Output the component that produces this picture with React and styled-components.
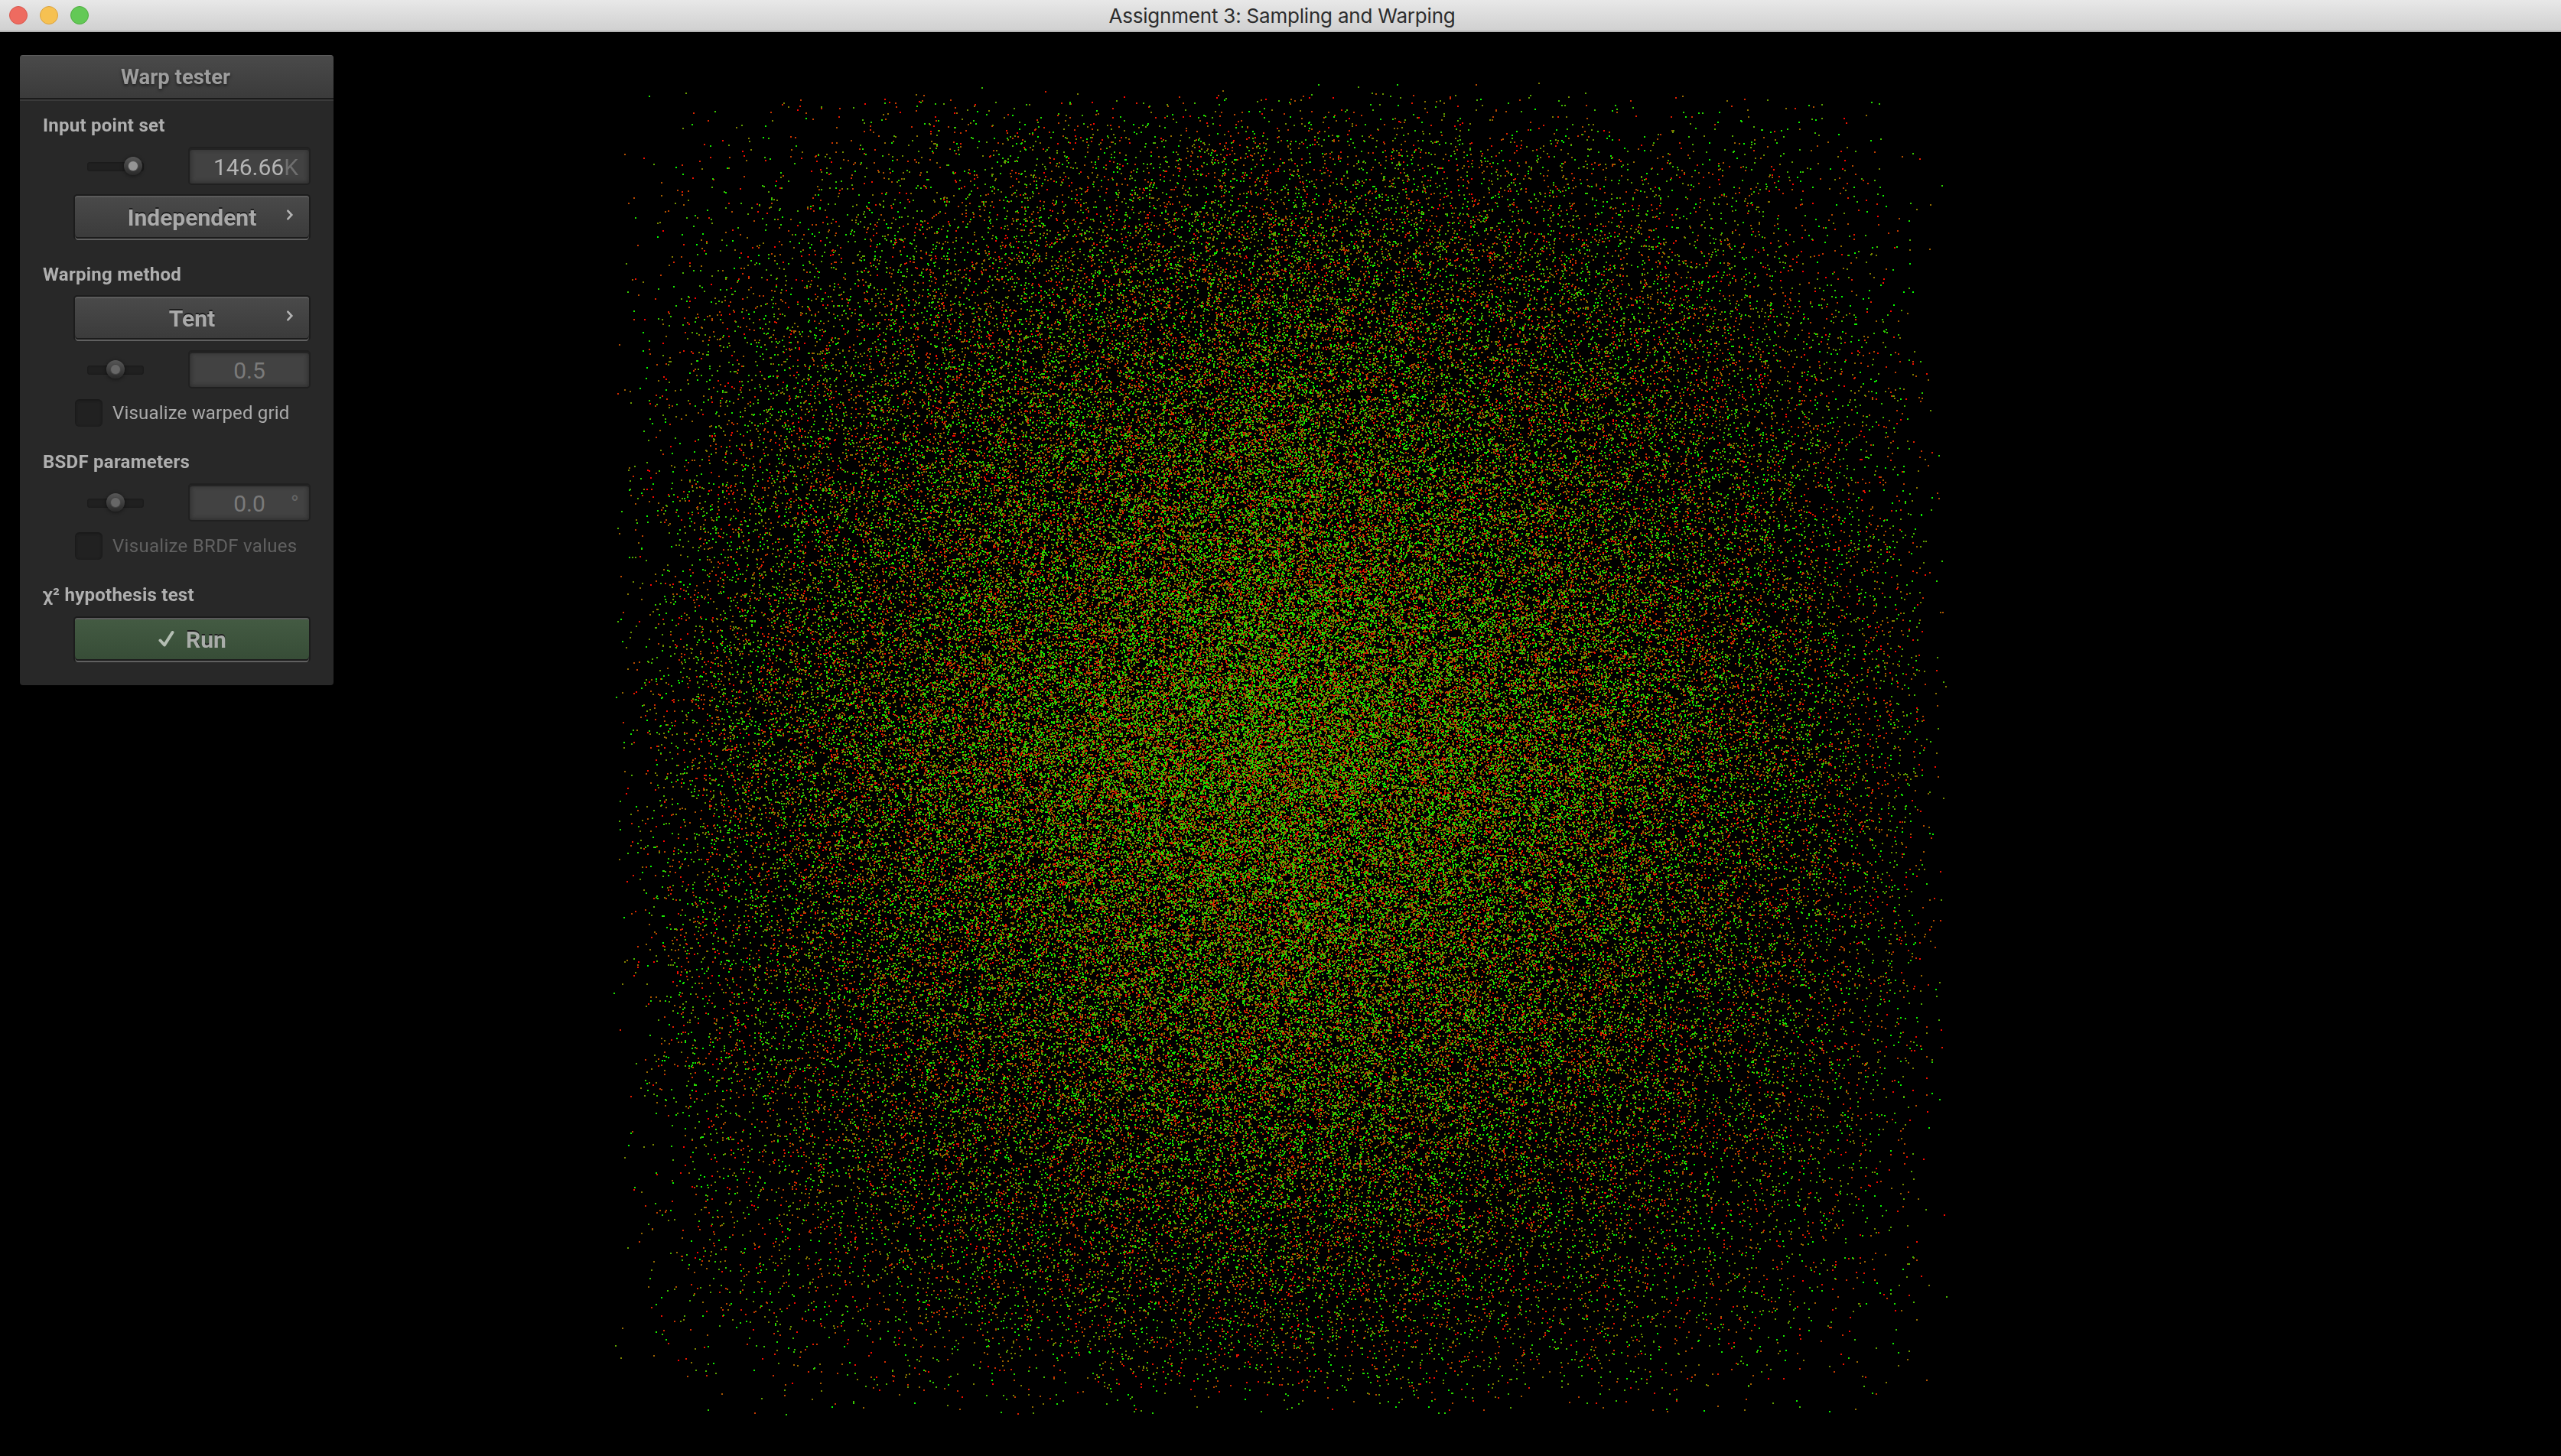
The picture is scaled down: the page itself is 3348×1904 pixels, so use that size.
import React, { useEffect, useRef } from 'react';
import styled, { createGlobalStyle, css } from 'styled-components';

const GlobalStyle = createGlobalStyle`
  html, body { margin: 0; background: #000; overflow: hidden; }
  * { box-sizing: border-box; }
`;

const AppWindow = styled.div`
  width: 3348px;
  height: 1904px;
  display: flex;
  flex-direction: column;
  background: #000;
  font-family: Roboto, 'Liberation Sans', sans-serif;
  font-weight: 400;
  color: #a9a9a9;
`;

const TitleBar = styled.header`
  height: 42px;
  flex: none;
  display: grid;
  grid-template-columns: 1fr auto 1fr;
  align-items: center;
  background: linear-gradient(#e8e8e8, #d0d0d0);
  border-bottom: 2px solid #b3b3b3;
`;

const Lights = styled.div`
  display: flex;
  gap: 16px;
  padding-left: 12px;
`;

const Light = styled.span`
  width: 24px;
  height: 24px;
  border-radius: 50%;
  background: ${(p) => p.$fill};
  border: 1px solid ${(p) => p.$edge};
`;

const WindowTitle = styled.h1`
  margin: 0;
  padding: 1px 0 0 4px;
  font: 400 26px/39px Inter, 'Liberation Sans', sans-serif;
  letter-spacing: -0.2px;
  color: #2c2c2c;
`;

const Viewport = styled.main`
  position: relative;
  flex: 1;
  display: flex;
  align-items: flex-start;
  padding: 30px 0 0 26px;
`;

const Plot = styled.canvas`
  position: absolute;
  inset: 0;
`;

const Panel = styled.section`
  position: relative;
  width: 410px;
  height: 824px;
  border-radius: 4px;
  background: #282828;
  overflow: hidden;
`;

const PanelHeader = styled.h2`
  margin: 0;
  height: 60px;
  padding-right: 3px;
  border-top: 1px solid #5c5c5c;
  border-bottom: 2px solid #3a3a3a;
  box-shadow: inset 0 -2px #1b1b1b;
  background: linear-gradient(#4a4a4a, #3a3a3a);
  text-align: center;
  font-size: 27.5px;
  font-weight: 700;
  line-height: 55px;
  color: #9d9d9d;
  text-shadow: 0 2px 4px rgba(0, 0, 0, 0.6);
`;

const Body = styled.div`
  display: flex;
  flex-direction: column;
  padding: 14px 30px 0;
`;

const Group = styled.div`
  display: flex;
  flex-direction: column;
  gap: 12px;
  margin-bottom: ${(p) => p.$after}px;
`;

const Caption = styled.h3`
  margin: 0 0 ${(p) => p.$after - 12}px;
  height: 36px;
  font-size: 24px;
  line-height: 37px;
  font-weight: 700;
  letter-spacing: 0.25px;
  color: #afafaf;
  white-space: nowrap;
`;

const Row = styled.div`
  display: flex;
  align-items: flex-start;
  justify-content: space-between;
  height: 50px;
  padding-left: 58px;
`;

const Track = styled.div`
  position: relative;
  width: 74px;
  height: 12px;
  margin-top: 20px;
  border-radius: 4px;
  background: #202020;
  box-shadow: inset 0 0 2px 1px #1b1b1b;
`;

const Knob = styled.span`
  position: absolute;
  top: -7px;
  left: ${(p) => p.$at}px;
  width: 24px;
  height: 24px;
  border-radius: 50%;
  display: grid;
  place-items: center;
  background: linear-gradient(#575757, #292929);
  box-shadow: 0 1px 4px 1px rgba(0, 0, 0, 0.35);

  &::after {
    content: '';
    width: 12px;
    height: 12px;
    border-radius: 50%;
    background: ${(p) => (p.$dim ? '#676767' : '#969696')};
    box-shadow: 0 0 0 1px ${(p) => (p.$dim ? '#484848' : '#555')};
  }
`;

const NumberBox = styled.div`
  position: relative;
  width: 160px;
  height: 50px;
  padding: ${(p) => (p.$dim ? '0' : '0 14px 0 0')};
  border: 2px solid #202020;
  border-radius: 5px;
  background: #424242;
  box-shadow: inset 0 2px 0 #242424, inset 0 0 5px 2px #303030;
  font-size: 30px;
  line-height: 50px;
  text-align: ${(p) => (p.$dim ? 'center' : 'right')};
  color: ${(p) => (p.$dim ? '#7a7a7a' : '#b5b5b5')};
  white-space: nowrap;
`;

const Unit = styled.span`
  color: #6f6f6f;
`;

const Degree = styled.span`
  position: absolute;
  right: 13px;
  top: 0;
  color: #656565;
`;

const Button = styled.div`
  position: relative;
  height: 60px;
  margin-left: 40px;
  border: 2px solid #1c1c1c;
  border-bottom: 0;
  border-radius: 5px;
  display: flex;
  justify-content: center;
  align-items: flex-start;
  font-size: 30px;
  font-weight: 700;
  line-height: 57px;
  color: #aaa;
  text-shadow: 0 -2px 0 #1e1e1e;
  background: linear-gradient(#4a4a4a, #3a3a3a);
  box-shadow: inset 0 2px #5b5b5b, inset 0 -2px #606060, inset 0 -4px #1c1c1c;
  ${(p) =>
    p.$run &&
    css`
      background: linear-gradient(#445b43, #364c36);
      gap: 14px;
      color: #a9ada9;
    `}
`;

const Chevron = styled.svg`
  position: absolute;
  left: 275px;
  top: 17px;
`;

const Check = styled.svg`
  margin: 16px 0 0 1px;
`;

const CheckRow = styled.div`
  display: flex;
  align-items: center;
  height: 36px;
  margin: 2px 0 0 42px;
  gap: 13px;
  font-size: 24px;
  line-height: 37px;
  letter-spacing: ${(p) => (p.$dim ? '0.3px' : '0.18px')};
  white-space: nowrap;
  color: ${(p) => (p.$dim ? '#616161' : '#ababab')};
`;

const Box = styled.span`
  width: 36px;
  height: 36px;
  flex: none;
  border-radius: 6px;
  background: #212121;
  box-shadow: inset 0 1px 3px 1px #191919;
`;

const POINTS = 146660;

function randomSource(seed) {
  let s = seed;
  return () => {
    s = (s + 0x6d2b79f5) | 0;
    let t = Math.imul(s ^ (s >>> 15), 1 | s);
    t = (t + Math.imul(t ^ (t >>> 7), 61 | t)) ^ t;
    return ((t ^ (t >>> 14)) >>> 0) / 4294967296;
  };
}

// Tent-distributed samples, coloured from red to green in drawing order.
function PointCloud() {
  const ref = useRef(null);
  useEffect(() => {
    const ctx = ref.current.getContext('2d');
    const image = ctx.createImageData(3348, 1862);
    const pixels = new Uint32Array(image.data.buffer);
    pixels.fill(0xff000000);
    const rand = randomSource(11);
    const half = 875;
    for (let i = 0; i < POINTS; i += 1) {
      const x = Math.round(1674 + (rand() + rand() - 1) * half);
      const y = Math.round(939 + (rand() + rand() - 1) * half);
      const t = i / POINTS;
      const color = 0xff000000 | (Math.round(t * 255) << 8) | Math.round((1 - t) * 255);
      const at = y * 3348 + x;
      pixels[at] = color;
      pixels[at + 1] = color;
      pixels[at + 3348] = color;
      pixels[at + 3349] = color;
    }
    ctx.putImageData(image, 0, 0);
  }, []);
  return <Plot ref={ref} width={3348} height={1862} />;
}

const Slider = ({ at, dim }) => (
  <Track>
    <Knob $at={at} $dim={dim} />
  </Track>
);

const Dropdown = ({ children }) => (
  <Button>
    {children}
    <Chevron width="12" height="16" viewBox="0 0 12 16" fill="none" stroke="#b4b4b4" strokeWidth="2.6">
      <path d="M3.3 2.6 L8.3 8 L3.3 13.4" strokeLinecap="round" />
    </Chevron>
  </Button>
);

export default function App() {
  return (
    <AppWindow>
      <GlobalStyle />
      <TitleBar>
        <Lights>
          <Light $fill="#ee6b60" $edge="#d9584e" />
          <Light $fill="#f6c152" $edge="#dca440" />
          <Light $fill="#63c956" $edge="#4fae42" />
        </Lights>
        <WindowTitle>Assignment 3: Sampling and Warping</WindowTitle>
      </TitleBar>
      <Viewport>
        <PointCloud />
        <Panel>
          <PanelHeader>Warp tester</PanelHeader>
          <Body>
            <Group $after={27}>
              <Caption $after={10}>Input point set</Caption>
              <Row>
                <Slider at={48} />
                <NumberBox>
                  146.66<Unit>K</Unit>
                </NumberBox>
              </Row>
              <Dropdown>Independent</Dropdown>
            </Group>
            <Group $after={28}>
              <Caption $after={9}>Warping method</Caption>
              <Dropdown>Tent</Dropdown>
              <Row>
                <Slider at={25} dim />
                <NumberBox $dim>0.5</NumberBox>
              </Row>
              <CheckRow>
                <Box />
                Visualize warped grid
              </CheckRow>
            </Group>
            <Group $after={28}>
              <Caption $after={10}>BSDF parameters</Caption>
              <Row>
                <Slider at={25} dim />
                <NumberBox $dim>
                  0.0<Degree>°</Degree>
                </NumberBox>
              </Row>
              <CheckRow $dim>
                <Box />
                Visualize BRDF values
              </CheckRow>
            </Group>
            <Group $after={0}>
              <Caption $after={10}>χ² hypothesis test</Caption>
              <Button $run>
                <Check width="22" height="24" viewBox="0 0 22 24" fill="none" stroke="#b4beb3" strokeWidth="4">
                  <path d="M2.5 13.5 L8 19.5 L18.5 3" strokeLinecap="round" strokeLinejoin="round" />
                </Check>
                Run
              </Button>
            </Group>
          </Body>
        </Panel>
      </Viewport>
    </AppWindow>
  );
}
